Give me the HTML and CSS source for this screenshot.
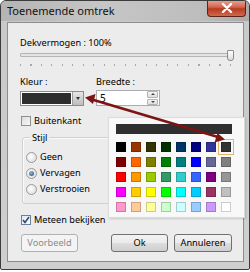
FILE: index.html
```html
<!DOCTYPE html>
<html>
<head>
<meta charset="utf-8">
<link rel="stylesheet" href="styles.css">
</head>
<body>
<div class="window">
  <div class="titlebar">
    <span class="title">Toenemende omtrek</span>
    <div class="close">
      <svg width="12" height="10" viewBox="0 0 12 10"><path d="M2 1 L10 9 M10 1 L2 9" stroke="#fff" stroke-width="2.4" stroke-linecap="round"/></svg>
    </div>
  </div>
  <div class="content">
    <div class="label">Dekvermogen : 100%</div>
    <div class="slider">
      <div class="track"></div>
      <div class="thumb"></div>
      <div class="ticks"></div>
    </div>
    <div class="fields">
      <div class="field">
        <div class="label">Kleur :</div>
        <div class="colorbox">
          <div class="colorfill"></div>
          <div class="ddbtn"><span class="tri"></span></div>
        </div>
      </div>
      <div class="field">
        <div class="label">Breedte :</div>
        <div class="spin">
          <span class="val">5</span>
          <div class="spinbtns">
            <div class="sb"><span class="up"></span></div>
            <div class="sb"><span class="down"></span></div>
          </div>
        </div>
      </div>
    </div>
    <div class="check row1"><span class="box"></span><span>Buitenkant</span></div>
    <div class="group">
      <span class="legend">Stijl</span>
      <div class="radio"><span class="dot"></span><span>Geen</span></div>
      <div class="radio"><span class="dot on"></span><span>Vervagen</span></div>
      <div class="radio"><span class="dot"></span><span>Verstrooien</span></div>
    </div>
    <div class="check row2"><span class="box checked">
      <svg width="8" height="8" viewBox="0 0 8 8"><path d="M1 4 L3 6.5 L7 1" fill="none" stroke="#2b4a7a" stroke-width="1.6"/></svg>
    </span><span>Meteen bekijken</span></div>
    <div class="buttons">
      <div class="btn disabled">Voorbeeld</div>
      <div class="spacer"></div>
      <div class="btn">Ok</div>
      <div class="btn">Annuleren</div>
    </div>
    <div class="palette">
      <div class="current"></div>
      <div class="grid">
        <span class="sw" style="background:#000000"></span>
        <span class="sw" style="background:#993300"></span>
        <span class="sw" style="background:#333300"></span>
        <span class="sw" style="background:#003300"></span>
        <span class="sw" style="background:#003366"></span>
        <span class="sw" style="background:#000080"></span>
        <span class="sw" style="background:#333399"></span>
        <span class="sw sel" style="background:#333333"></span>
        <span class="sw" style="background:#800000"></span>
        <span class="sw" style="background:#ff6600"></span>
        <span class="sw" style="background:#808000"></span>
        <span class="sw" style="background:#008000"></span>
        <span class="sw" style="background:#008080"></span>
        <span class="sw" style="background:#0000ff"></span>
        <span class="sw" style="background:#666699"></span>
        <span class="sw" style="background:#808080"></span>
        <span class="sw" style="background:#ff0000"></span>
        <span class="sw" style="background:#ff9900"></span>
        <span class="sw" style="background:#99cc00"></span>
        <span class="sw" style="background:#339966"></span>
        <span class="sw" style="background:#33cccc"></span>
        <span class="sw" style="background:#3366ff"></span>
        <span class="sw" style="background:#800080"></span>
        <span class="sw" style="background:#969696"></span>
        <span class="sw" style="background:#ff00ff"></span>
        <span class="sw" style="background:#ffcc00"></span>
        <span class="sw" style="background:#ffff00"></span>
        <span class="sw" style="background:#00ff00"></span>
        <span class="sw" style="background:#00ffff"></span>
        <span class="sw" style="background:#00ccff"></span>
        <span class="sw" style="background:#993366"></span>
        <span class="sw" style="background:#c0c0c0"></span>
        <span class="sw" style="background:#ff99cc"></span>
        <span class="sw" style="background:#ffcc99"></span>
        <span class="sw" style="background:#ffff99"></span>
        <span class="sw" style="background:#ccffcc"></span>
        <span class="sw" style="background:#ccffff"></span>
        <span class="sw" style="background:#99ccff"></span>
        <span class="sw" style="background:#cc99ff"></span>
        <span class="sw" style="background:#ffffff"></span>
      </div>
    </div>
  </div>
  <svg class="arrow" width="250" height="272" viewBox="0 0 250 272">
    <line x1="92" y1="99.5" x2="218" y2="137" stroke="#7c1414" stroke-width="2.6"/>
    <polygon points="85,97.5 95.5,94 93,104" fill="#7c1414"/>
    <polygon points="225,139.5 214.5,142.5 217.5,133" fill="#7c1414"/>
  </svg>
</div>
</body>
</html>
```

FILE: styles.css
```css
html, body {
  margin: 0;
  padding: 0;
  background: #ffffff;
}
body {
  font-family: "Noto Sans", "Open Sans", sans-serif;
  font-size: 9.2px;
  color: #000;
}
.window {
  position: relative;
  width: 248px;
  height: 268px;
  border: 1px solid #3c3c3c;
  border-radius: 6px 6px 2px 2px;
  background: linear-gradient(to bottom, #bdbdbd 0px, #c9c9c9 20px, #cfcfcf 100%);
  display: flex;
  flex-direction: column;
  overflow: hidden;
}
.titlebar {
  height: 20px;
  display: flex;
  align-items: center;
  padding-left: 6px;
  background: linear-gradient(to right, #b4b4b4, #c6c6c6 40%, #bdbdbd 80%, #a9a9a9);
}
.title {
  flex: 1;
  font-size: 11px;
  line-height: 16px;
  color: #111;
}
.close {
  align-self: flex-start;
  width: 37px;
  height: 16px;
  margin-right: 3px;
  margin-top: -1px;
  border: 1px solid #5a2418;
  border-top: none;
  border-radius: 0 0 4px 4px;
  background: linear-gradient(to bottom, #e9a89a 0%, #d2644c 45%, #b83a22 55%, #cf6a4a 100%);
  display: flex;
  align-items: center;
  justify-content: center;
}
.content {
  position: relative;
  margin: 1px 5px 7px 6px;
  flex: 1;
  border: 1px solid #8d8d8d;
  background: #ececec;
  padding: 12px 0 0 12px;
  display: flex;
  flex-direction: column;
}
.label {
  line-height: 15px;
  white-space: nowrap;
}
.slider {
  position: relative;
  width: 214px;
  height: 16px;
}
.track {
  margin-top: 3px;
  height: 2px;
  width: 210px;
  border: 1px solid #b5b5b5;
  border-radius: 1px;
  background: #e4e4e4;
}
.thumb {
  position: absolute;
  left: 207px;
  top: 0px;
  width: 5px;
  height: 9px;
  border: 1px solid #8a8a8a;
  border-radius: 1px 1px 3px 3px;
  background: linear-gradient(to bottom, #ffffff, #dcdcdc);
}
.ticks {
  margin-top: 7px;
  height: 2px;
  width: 211px;
  background: repeating-linear-gradient(to right, #a8a8a8 0 1px, transparent 1px 10.5px);
}
.fields {
  display: flex;
  margin-top: 8px;
  gap: 12px;
}
.field .label {
  line-height: 16px;
}
.colorbox {
  margin-top: 1px;
  width: 64px;
  height: 15px;
  box-sizing: border-box;
  border: 1px solid #8c8c8c;
  display: flex;
  background: #fff;
}
.colorfill {
  flex: 1;
  margin: 1px;
  background: #2e2e2e;
}
.ddbtn {
  width: 10px;
  background: linear-gradient(to bottom, #e6e6e6, #bdbdbd);
  border-left: 1px solid #9b9b9b;
  display: flex;
  align-items: center;
  justify-content: center;
}
.tri {
  width: 0;
  height: 0;
  border-left: 2.5px solid transparent;
  border-right: 2.5px solid transparent;
  border-top: 3px solid #333;
}
.spin {
  width: 64px;
  height: 16px;
  box-sizing: border-box;
  border: 1px solid #abadb3;
  background: #fff;
  display: flex;
  align-items: center;
}
.val {
  flex: 1;
  padding-left: 3px;
  line-height: 14px;
  font-size: 10px;
}
.spinbtns {
  width: 11px;
  height: 14px;
  display: flex;
  flex-direction: column;
  gap: 1px;
  margin-right: 1px;
}
.sb {
  flex: 1;
  border: 1px solid #b3b3b3;
  border-radius: 1px;
  background: linear-gradient(to bottom, #f5f5f5, #dedede);
  display: flex;
  align-items: center;
  justify-content: center;
}
.up {
  border-left: 2px solid transparent;
  border-right: 2px solid transparent;
  border-bottom: 2px solid #444;
}
.down {
  border-left: 2px solid transparent;
  border-right: 2px solid transparent;
  border-top: 2px solid #444;
}
.check {
  display: flex;
  align-items: center;
  gap: 2px;
  line-height: 16px;
  margin-left: 1px;
}
.row1 {
  margin-top: 7px;
}
.row2 {
  margin-top: 8px;
}
.box {
  width: 8px;
  height: 8px;
  border: 1px solid #8e8f8f;
  background: linear-gradient(135deg, #dcdcdc, #f8f8f8);
  display: flex;
  align-items: center;
  justify-content: center;
  margin-right: 1px;
}
.box.checked {
  background: linear-gradient(135deg, #e3e9f2, #fbfcfd);
  border-color: #6d7f99;
}
.group {
  margin-top: 8px;
  margin-left: 2px;
  width: 110px;
  border: 1px solid #d0d0d0;
  border-radius: 3px;
  box-shadow: 1px 1px 0 #fbfbfb inset;
  padding: 0 0 6px 3px;
  display: flex;
  flex-direction: column;
}
.legend {
  align-self: flex-start;
  margin-top: -8px;
  margin-left: 4px;
  padding: 0 2px;
  background: #ececec;
  line-height: 16px;
  margin-bottom: 3px;
}
.radio {
  display: flex;
  align-items: center;
  gap: 3px;
  line-height: 16px;
}
.dot {
  width: 9px;
  height: 9px;
  border: 1px solid #9a9a9a;
  border-radius: 50%;
  background: radial-gradient(circle at 40% 40%, #ffffff, #d6d6d6);
  display: flex;
  align-items: center;
  justify-content: center;
}
.dot.on::after {
  content: "";
  width: 5px;
  height: 5px;
  border-radius: 50%;
  background: radial-gradient(circle at 40% 35%, #8fb6d9, #1d4f7c);
}
.buttons {
  display: flex;
  margin-top: 6px;
  gap: 6px;
  margin-left: 1px;
  width: 211px;
}
.spacer {
  flex: 1;
}
.btn {
  width: 55px;
  height: 16px;
  border: 1px solid #707070;
  border-radius: 3px;
  background: linear-gradient(to bottom, #f2f2f2 0%, #ebebeb 50%, #dddddd 51%, #cfcfcf 100%);
  text-align: center;
  line-height: 16px;
}
.btn:last-child {
  width: 56px;
}
.btn.disabled {
  border-color: #adb2b5;
  background: #f4f4f4;
  color: #8a8a8a;
}
.palette {
  position: absolute;
  left: 100px;
  top: 94px;
  width: 122px;
  height: 93px;
  padding: 6px 6px 0 7px;
  background: #f8f8f8;
  border: 1px solid #dcdcdc;
  box-shadow: 1px 1px 2px rgba(0,0,0,0.15);
  display: flex;
  flex-direction: column;
  gap: 8px;
}
.current {
  height: 10px;
  width: 116px;
  background: #2f2f2f;
}
.grid {
  display: grid;
  grid-template-columns: repeat(8, 10px);
  grid-auto-rows: 10px;
  gap: 5px;
}
.sw {
  display: block;
  box-shadow: inset 0 0 0 1px rgba(0,0,0,0.2);
}
.sw.sel {
  outline: 1px solid #dcb66c;
  outline-offset: 2px;
}
.arrow {
  position: absolute;
  left: -1px;
  top: -1px;
  pointer-events: none;
}
```
